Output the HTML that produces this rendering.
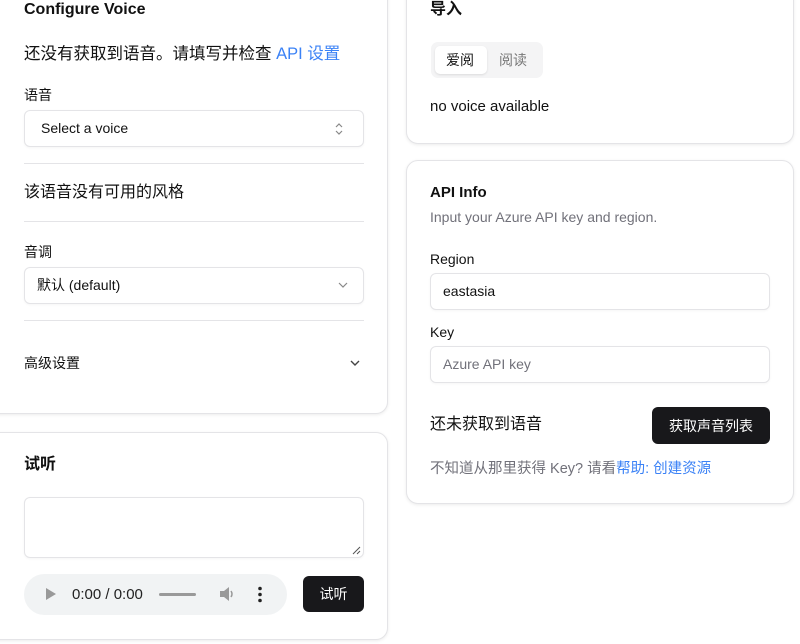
<!DOCTYPE html>
<html><head><meta charset="utf-8"><style>
*{box-sizing:border-box;margin:0;padding:0}
body{width:800px;height:644px;background:#fff;font-family:"Liberation Sans","Noto Sans CJK SC",sans-serif;color:#111;position:relative;overflow:hidden}
.a{position:absolute;white-space:nowrap}
.card{position:absolute;border:1px solid #e4e4e7;border-radius:12px;background:#fff;box-shadow:0 1px 3px rgba(0,0,0,.08)}
.box{position:absolute;border:1px solid #e4e4e7;border-radius:6px;background:#fff;box-shadow:0 1px 2px rgba(0,0,0,.04)}
.hr{position:absolute;height:1px;background:#e4e4e7}
.b{font-weight:bold}
.btn{position:absolute;background:#18181b;color:#fff;border-radius:6px;font-size:14px;display:flex;align-items:center;justify-content:center}
</style></head><body>
<div class="card" style="left:-12px;top:-20px;width:400px;height:434px"></div>
<div class="card" style="left:-12px;top:432px;width:400px;height:208px"></div>
<div class="card" style="left:406px;top:-20px;width:388px;height:164px"></div>
<div class="card" style="left:406px;top:160px;width:388px;height:344px"></div>

<div class="a b" style="left:24px;top:1px;font-size:16px;line-height:18px">Configure Voice</div>
<div class="a" style="left:24px;top:44px;font-size:16.5px;line-height:20px">还没有获取到语音。请填写并检查 <span style="color:#3b82f6">API 设置</span></div>
<div class="a" style="left:24px;top:86px;font-size:14px;line-height:18px">语音</div>
<div class="box" style="left:24px;top:110px;width:340px;height:37px"></div>
<div class="a" style="left:41px;top:119px;font-size:14px;line-height:18px">Select a voice</div>
<svg class="a" style="left:333px;top:121px" width="12" height="16" viewBox="0 0 12 16"><path d="M3 6l3-3 3 3M3 10l3 3 3-3" fill="none" stroke="#888" stroke-width="1.2"/></svg>
<div class="hr" style="left:24px;top:163px;width:340px"></div>
<div class="a" style="left:24px;top:183px;font-size:16px;line-height:20px">该语音没有可用的风格</div>
<div class="hr" style="left:24px;top:221px;width:340px"></div>
<div class="a" style="left:24px;top:243px;font-size:14px;line-height:18px">音调</div>
<div class="box" style="left:24px;top:267px;width:340px;height:37px"></div>
<div class="a" style="left:37px;top:276px;font-size:14px;line-height:18px">默认 (default)</div>
<svg class="a" style="left:337px;top:280px" width="12" height="10" viewBox="0 0 12 10"><path d="M2 3l4 4 4-4" fill="none" stroke="#888" stroke-width="1.2"/></svg>
<div class="hr" style="left:24px;top:320px;width:340px"></div>
<div class="a" style="left:24px;top:354px;font-size:14px;line-height:18px">高级设置</div>
<svg class="a" style="left:349px;top:358px" width="12" height="10" viewBox="0 0 12 10"><path d="M2 3l4 4 4-4" fill="none" stroke="#444" stroke-width="1.4"/></svg>

<div class="a b" style="left:24px;top:456px;font-size:16px;line-height:18px">试听</div>
<div class="box" style="left:24px;top:497px;width:340px;height:61px"></div>
<svg class="a" style="left:352px;top:546px" width="9" height="9" viewBox="0 0 9 9"><path d="M1 8L8 1M5 8L8 5" stroke="#555" stroke-width="1"/></svg>
<div class="a" style="left:24px;top:574px;width:263px;height:41px;border-radius:21px;background:#f1f3f4"></div>
<svg class="a" style="left:45px;top:587px" width="12" height="14" viewBox="0 0 12 14"><path d="M1 1v12l10-6z" fill="#999"/></svg>
<div class="a" style="left:72px;top:586px;font-size:15px;line-height:18px;color:#222">0:00 / 0:00</div>
<div class="a" style="left:159px;top:593px;width:37px;height:3px;border-radius:2px;background:#999"></div>
<svg class="a" style="left:219px;top:586px" width="18" height="16" viewBox="0 0 18 16"><path d="M1 5h4l5-4v14l-5-4H1z" fill="#999"/><path d="M12 5q2 3 0 6" stroke="#999" fill="none" stroke-width="1.5"/></svg>
<svg class="a" style="left:257px;top:586px" width="6" height="17" viewBox="0 0 6 17"><circle cx="3" cy="2.5" r="1.8" fill="#222"/><circle cx="3" cy="8.5" r="1.8" fill="#222"/><circle cx="3" cy="14.5" r="1.8" fill="#222"/></svg>
<div class="btn" style="left:303px;top:576px;width:61px;height:36px">试听</div>

<div class="a b" style="left:430px;top:1px;font-size:16px;line-height:18px">导入</div>
<div class="a" style="left:431px;top:42px;width:112px;height:36px;border-radius:7px;background:#f4f4f5"></div>
<div class="a" style="left:435px;top:46px;width:52px;height:28px;border-radius:5px;background:#fff;box-shadow:0 1px 2px rgba(0,0,0,.1)"></div>
<div class="a" style="left:446px;top:51px;font-size:14px;line-height:18px">爱阅</div>
<div class="a" style="left:499px;top:51px;font-size:14px;line-height:18px;color:#777">阅读</div>
<div class="a" style="left:430px;top:98px;font-size:15px;line-height:18px">no voice available</div>

<div class="a b" style="left:430px;top:184px;font-size:15px;line-height:18px">API Info</div>
<div class="a" style="left:430px;top:208px;font-size:14px;line-height:18px;color:#71717a">Input your Azure API key and region.</div>
<div class="a" style="left:430px;top:250px;font-size:14px;line-height:18px">Region</div>
<div class="box" style="left:430px;top:273px;width:340px;height:37px"></div>
<div class="a" style="left:443px;top:282px;font-size:14px;line-height:18px">eastasia</div>
<div class="a" style="left:430px;top:323px;font-size:14px;line-height:18px">Key</div>
<div class="box" style="left:430px;top:346px;width:340px;height:37px"></div>
<div class="a" style="left:443px;top:355px;font-size:14px;line-height:18px;color:#71717a">Azure API key</div>
<div class="a" style="left:430px;top:415px;font-size:16px;line-height:20px">还未获取到语音</div>
<div class="btn" style="left:652px;top:407px;width:118px;height:37px">获取声音列表</div>
<div class="a" style="left:430px;top:460px;font-size:14.5px;line-height:18px;color:#71717a">不知道从那里获得 Key? 请看<span style="color:#3b82f6">帮助: 创建资源</span></div>
</body></html>
